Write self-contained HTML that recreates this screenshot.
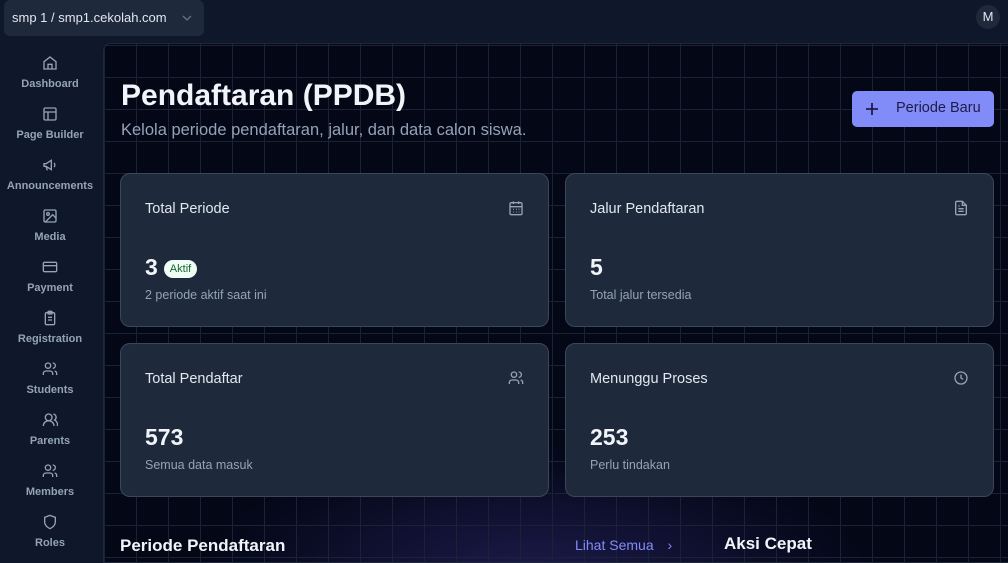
<!DOCTYPE html>
<html><head><meta charset="utf-8"><style>
*{box-sizing:border-box;margin:0;padding:0}
body{width:1008px;height:559px;overflow:hidden;background:#0f172a;font-family:"Liberation Sans",sans-serif;color:#e2e8f0;position:relative}
.top{position:absolute;left:0;top:0;width:1008px;height:44px;background:#0f172a}
.sel{position:absolute;left:4px;top:0;width:200px;height:36px;background:#1e293b;border-radius:6px;font-size:13px;color:#e2e8f0;padding:10px 0 0 8px}
.sel svg{position:absolute;right:12px;top:15px}
.av{position:absolute;left:976px;top:5px;width:24px;height:24px;border-radius:50%;background:#1e293b;color:#e2e8f0;font-size:13px;text-align:center;line-height:24px}
.side{position:absolute;left:0;top:44px;width:103px;height:515px;background:#0f172a}
.nav{position:absolute;left:0;width:100px;text-align:center;font-size:11px;font-weight:bold;color:#94a3b8}
.nav svg{display:block;margin:0 auto 7px}
.main{position:absolute;left:103px;top:43px;width:910px;height:520px;border:1px solid #1e293b;border-radius:8px 0 0 0;overflow:hidden;
background:
linear-gradient(#1a2236 1px,transparent 1px) 0 1px/32px 32px,
linear-gradient(90deg,#1a2236 1px,transparent 1px) 0 0/32px 32px,
radial-gradient(ellipse 420px 160px at 430px 530px,#1c1a4a 0%,transparent 80%),
#030716}
h1{position:absolute;left:17px;top:35px;font-size:30px;font-weight:bold;color:#f1f5f9}
.sub{position:absolute;left:17px;top:77px;font-size:16.5px;color:#94a3b8}
.btn{position:absolute;left:748px;top:47px;width:142px;height:36px;background:#818cf8;border-radius:5px;color:#1e1b4b;font-size:14.5px}
.btn span{position:absolute;left:44px;top:9px}
.btn svg{position:absolute;left:14px;top:12px}
.card{position:absolute;width:429px;height:154px;background:#1e293b;border:1px solid #3b4658;border-radius:10px}
.card .t{position:absolute;left:24px;top:27px;font-size:14.5px;color:#e2e8f0}
.card .n{position:absolute;left:24px;top:80px;font-size:23px;font-weight:bold;color:#f1f5f9}
.card .d{position:absolute;left:24px;top:114px;font-size:12.5px;color:#94a3b8}
.card svg{position:absolute;right:24px;top:26px}
.badge{display:inline-block;background:#f0fdf4;color:#166534;font-size:11px;font-weight:normal;border-radius:9px;padding:3px 6px;vertical-align:3px;margin-left:6px}
.h2{position:absolute;font-size:17px;font-weight:bold;color:#f1f5f9}
</style></head><body>
<div class="top">
<div class="sel">smp 1 / smp1.cekolah.com<svg width="10" height="6" viewBox="0 0 10 6"><path d="M1 1l4 4 4-4" stroke="#64748b" fill="none" stroke-width="1.3"/></svg></div>
<div class="av">M</div>
</div>
<div class="side">
<div class="nav" style="top:11px"><svg width="16" height="16" viewBox="0 0 24 24" fill="none" stroke="#94a3b8" stroke-width="2"><path d="M3 10l9-7 9 7v11H3z"/><path d="M9 21v-7h6v7"/></svg>Dashboard</div>
<div class="nav" style="top:62px"><svg width="16" height="16" viewBox="0 0 24 24" fill="none" stroke="#94a3b8" stroke-width="2"><rect x="3" y="3" width="18" height="18" rx="2"/><path d="M3 9h18M9 9v12"/></svg>Page Builder</div>
<div class="nav" style="top:113px"><svg width="16" height="16" viewBox="0 0 24 24" fill="none" stroke="#94a3b8" stroke-width="2"><path d="M3 10v4h3l8 5V5L6 10z"/><path d="M6 14l2 6"/><path d="M18 9a4 4 0 010 6"/></svg>Announcements</div>
<div class="nav" style="top:164px"><svg width="16" height="16" viewBox="0 0 24 24" fill="none" stroke="#94a3b8" stroke-width="2"><rect x="3" y="3" width="18" height="18" rx="2"/><circle cx="9" cy="9" r="2"/><path d="M21 15l-5-5L5 21"/></svg>Media</div>
<div class="nav" style="top:215px"><svg width="16" height="16" viewBox="0 0 24 24" fill="none" stroke="#94a3b8" stroke-width="2"><rect x="2" y="5" width="20" height="14" rx="2"/><path d="M2 10h20"/></svg>Payment</div>
<div class="nav" style="top:266px"><svg width="16" height="16" viewBox="0 0 24 24" fill="none" stroke="#94a3b8" stroke-width="2"><rect x="5" y="4" width="14" height="18" rx="2"/><rect x="9" y="2" width="6" height="4" rx="1"/><path d="M9 11h6M9 15h6"/></svg>Registration</div>
<div class="nav" style="top:317px"><svg width="16" height="16" viewBox="0 0 24 24" fill="none" stroke="#94a3b8" stroke-width="2"><circle cx="9" cy="7" r="4"/><path d="M2 21v-2a4 4 0 014-4h6a4 4 0 014 4v2M16 3a4 4 0 010 8M22 21v-2a4 4 0 00-3-4"/></svg>Students</div>
<div class="nav" style="top:368px"><svg width="16" height="16" viewBox="0 0 24 24" fill="none" stroke="#94a3b8" stroke-width="2"><circle cx="10" cy="8" r="5"/><path d="M2 21a8 8 0 0116 0M17 3a5 5 0 012 9 8 8 0 014 9"/></svg>Parents</div>
<div class="nav" style="top:419px"><svg width="16" height="16" viewBox="0 0 24 24" fill="none" stroke="#94a3b8" stroke-width="2"><circle cx="9" cy="7" r="4"/><path d="M2 21v-2a4 4 0 014-4h6a4 4 0 014 4v2M16 3a4 4 0 010 8M22 21v-2a4 4 0 00-3-4"/></svg>Members</div>
<div class="nav" style="top:470px"><svg width="16" height="16" viewBox="0 0 24 24" fill="none" stroke="#94a3b8" stroke-width="2"><path d="M12 2l8 3v7c0 5-4 8-8 10-4-2-8-5-8-10V5z"/></svg>Roles</div>
</div>
<div class="main">
<h1>Pendaftaran (PPDB)</h1>
<div class="sub">Kelola periode pendaftaran, jalur, dan data calon siswa.</div>
<div class="btn"><svg width="12" height="12" viewBox="0 0 12 12"><path d="M6 0v12M0 6h12" stroke="#1e1b4b" stroke-width="1.8"/></svg><span>Periode Baru</span></div>
<div class="card" style="left:16px;top:129px"><div class="t">Total Periode</div><svg width="16" height="16" viewBox="0 0 24 24" fill="none" stroke="#94a3b8" stroke-width="2"><rect x="3" y="4" width="18" height="18" rx="2"/><path d="M3 10h18M8 2v4M16 2v4M8 14h1M12 14h1M16 14h1M8 18h1M12 18h1M16 18h1"/></svg><div class="n">3<span class="badge">Aktif</span></div><div class="d">2 periode aktif saat ini</div></div>
<div class="card" style="left:461px;top:129px"><div class="t">Jalur Pendaftaran</div><svg width="16" height="16" viewBox="0 0 24 24" fill="none" stroke="#94a3b8" stroke-width="2"><path d="M14 2H6a2 2 0 00-2 2v16a2 2 0 002 2h12a2 2 0 002-2V8z"/><path d="M14 2v6h6M8 13h8M8 17h8M8 9h2"/></svg><div class="n">5</div><div class="d">Total jalur tersedia</div></div>
<div class="card" style="left:16px;top:299px"><div class="t">Total Pendaftar</div><svg width="16" height="16" viewBox="0 0 24 24" fill="none" stroke="#94a3b8" stroke-width="2"><circle cx="9" cy="7" r="4"/><path d="M2 21v-2a4 4 0 014-4h6a4 4 0 014 4v2M16 3a4 4 0 010 8M22 21v-2a4 4 0 00-3-4"/></svg><div class="n">573</div><div class="d">Semua data masuk</div></div>
<div class="card" style="left:461px;top:299px"><div class="t">Menunggu Proses</div><svg width="16" height="16" viewBox="0 0 24 24" fill="none" stroke="#94a3b8" stroke-width="2"><circle cx="12" cy="12" r="9"/><path d="M12 7v5l3 2"/></svg><div class="n">253</div><div class="d">Perlu tindakan</div></div>
<div class="h2" style="left:16px;top:492px">Periode Pendaftaran</div>
<div style="position:absolute;left:471px;top:493px;font-size:14px;color:#818cf8">Lihat Semua <span style="margin-left:10px">›</span></div>
<div class="h2" style="left:620px;top:490px">Aksi Cepat</div>
</div>
</body></html>
